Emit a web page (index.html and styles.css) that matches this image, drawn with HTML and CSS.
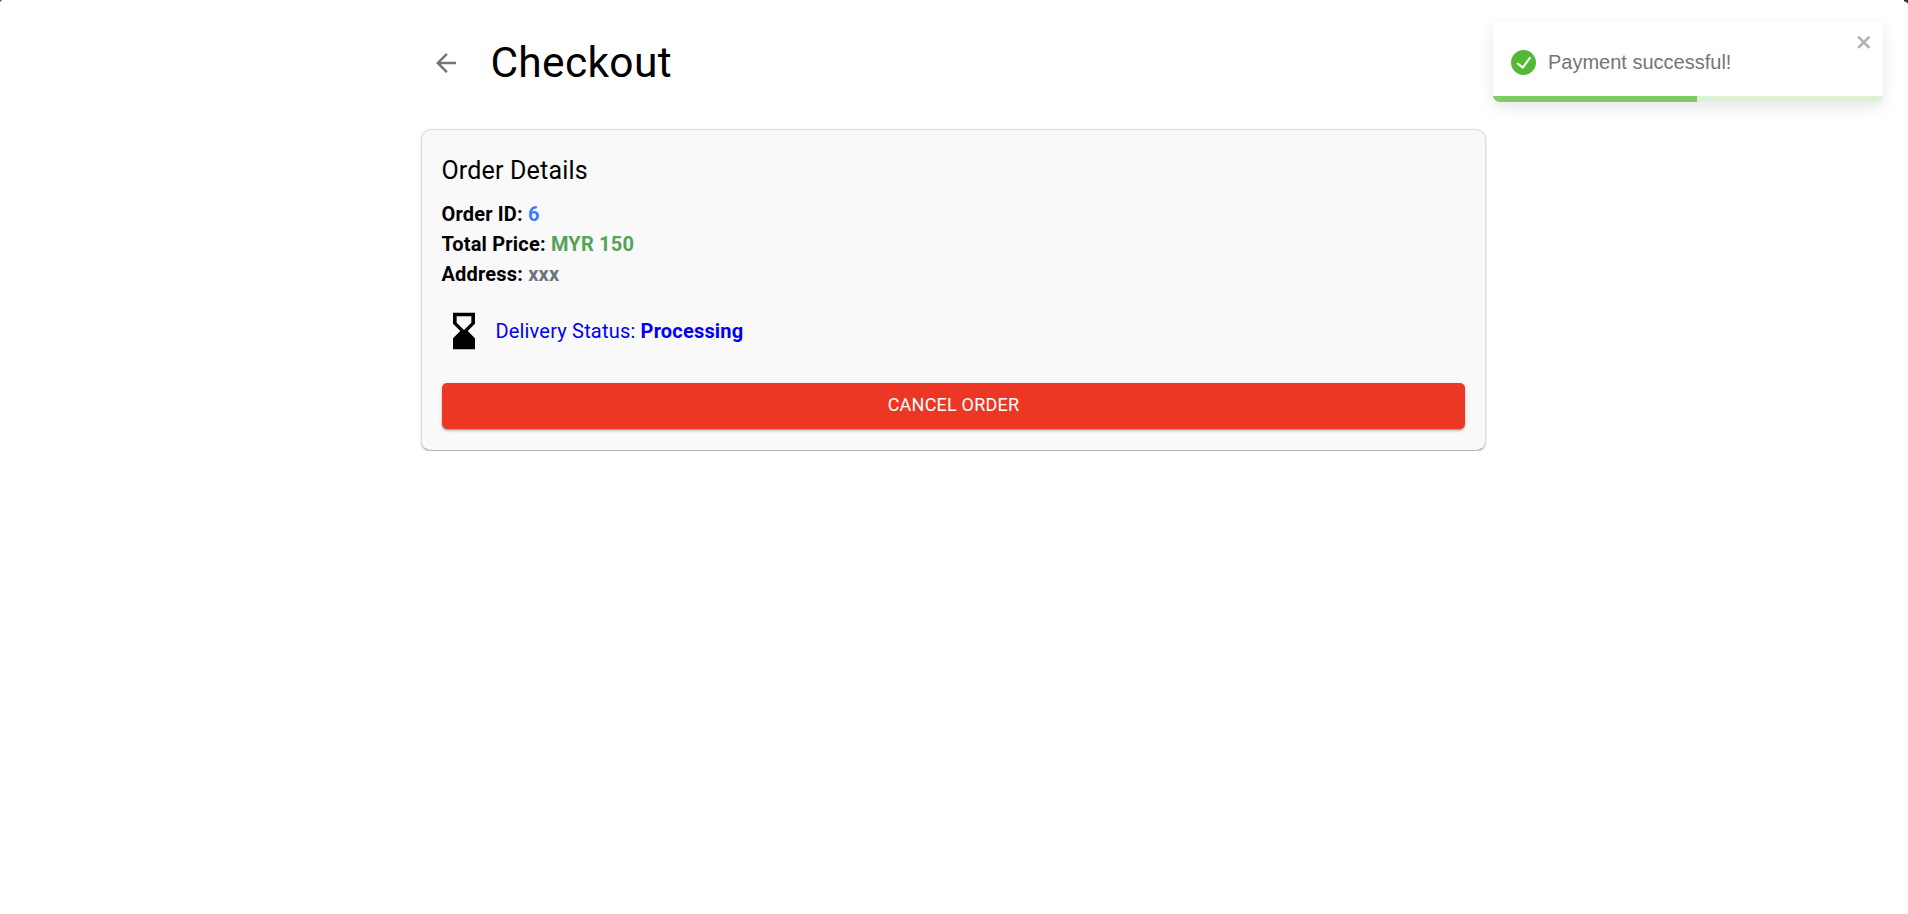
FILE: index.html
```html
<!DOCTYPE html>
<html lang="en">
<head>
<meta charset="utf-8">
<title>Checkout</title>
<link rel="stylesheet" href="styles.css">
</head>
<body>
<i class="corner corner-left"></i>
<i class="corner corner-right"></i>
<main class="container">
  <header class="header">
    <button class="back" aria-label="Back">
      <svg class="back-icon" viewBox="0 0 24 24"><path d="M20 11H7.83l5.59-5.59L12 4l-8 8 8 8 1.41-1.41L7.83 13H20v-2z"/></svg>
    </button>
    <h1 class="title">Checkout</h1>
  </header>
  <section class="card">
    <h2 class="card-title">Order Details</h2>
    <p class="row">Order ID: <span class="order-id">6</span></p>
    <p class="row">Total Price: <span class="price">MYR 150</span></p>
    <p class="row">Address: <span class="address">xxx</span></p>
    <div class="status">
      <svg class="status-icon" viewBox="0 0 24 24"><path d="m18 22-.01-6L14 12l3.99-4.01L18 2H6v6l4 4-4 3.99V22h12zM8 7.5V4h8v3.5l-4 4-4-4z"/></svg>
      <p class="status-text">Delivery Status: <strong>Processing</strong></p>
    </div>
    <button class="cancel">CANCEL ORDER</button>
  </section>
</main>
<div class="toast" role="alert">
  <svg class="toast-icon" viewBox="0 0 24 24"><path d="M12 0a12 12 0 1012 12A12.014 12.014 0 0012 0zm6.927 8.2l-6.845 9.289a1.011 1.011 0 01-1.43.188l-4.888-3.908a1 1 0 111.25-1.562l4.076 3.261 6.227-8.451a1 1 0 111.61 1.183z"/></svg>
  <span class="toast-text">Payment successful!</span>
  <svg class="toast-close" viewBox="0 0 14 16"><path fill-rule="evenodd" d="M7.71 8.23l3.75 3.75-1.48 1.48-3.75-3.75-3.75 3.75L1 11.98l3.75-3.75L1 4.48 2.48 3l3.75 3.75L9.98 3l1.48 1.48-3.75 3.75z"/></svg>
  <div class="progress"><div class="progress-bar"></div></div>
</div>
</body>
</html>
```
FILE: styles.css
```css
* { box-sizing: border-box; }
body {
  margin: 0;
  background: #fff;
  color: #000;
  font-family: Roboto, sans-serif;
  overflow: hidden;
}
h1, h2, p { margin: 0; font-weight: 400; }
button { border: 0; font-family: inherit; }

.container { width: 1065px; margin-left: calc(50% - 533px); padding-top: 37px; }

.header { display: flex; align-items: center; height: 52.5px; margin-bottom: 39.5px; }
.back {
  display: flex;
  width: 50px;
  padding: 10px;
  margin-right: 19.4px;
  background: none;
}
.back-icon { width: 30px; height: 30px; fill: #757575; }
.title { font-size: 42.5px; line-height: 52.5px; letter-spacing: 0.00735em; }

.card {
  height: 322px;
  padding: 21px 20px 0;
  border: 1px solid #ddd;
  border-bottom-color: #b4b4b4;
  border-radius: 10px;
  background: #f9f9f9;
  box-shadow: 0 1px 1px rgba(0, 0, 0, .14), 0 1px 3px rgba(0, 0, 0, .12);
}
.card-title { margin: 0 0 8px -0.6px; font-size: 25px; line-height: 40px; letter-spacing: 0.0075em; }
.row { margin-left: -0.6px; font-size: 20px; line-height: 30px; letter-spacing: 0.00938em; font-weight: 700; }
.order-id { color: #3a7ffb; }
.price { color: #55a357; }
.address { color: #6c757d; }

.status { display: flex; align-items: center; margin: 20px 0 30px; color: #0000f5; }
.status-icon { width: 44px; height: 44px; margin-right: 9.4px; fill: #000; }
.status-text { font-size: 20px; line-height: 30px; letter-spacing: 0.00938em; }

.cancel {
  display: block;
  width: 100%;
  height: 46px;
  padding: 0 0 3px;
  border-radius: 5px;
  background: #ec3724;
  color: #fff;
  font-size: 18px;
  font-weight: 400;
  letter-spacing: 0.012em;
  box-shadow: 0 3px 1px -2px rgba(0, 0, 0, .2), 0 2px 2px rgba(0, 0, 0, .14), 0 1px 5px rgba(0, 0, 0, .12);
}

.toast {
  position: absolute;
  top: 22px;
  right: 25px;
  display: flex;
  align-items: center;
  width: 390px;
  height: 80px;
  padding: 0 18px;
  border-radius: 7px;
  background: #fff;
  color: #757575;
  box-shadow: 0 5px 15px rgba(0, 0, 0, .1);
  overflow: hidden;
}
.toast-icon { width: 25px; height: 25px; margin-right: 12px; fill: #53b935; }
.toast-text { font-family: "Liberation Sans", Arial, sans-serif; font-size: 20px; }
.toast-close { position: absolute; top: 10px; right: 10px; width: 17.5px; height: 20px; fill: #b2b2b2; }
.progress { position: absolute; left: 0; right: 0; bottom: 0; height: 6px; background: #ddf1d7; }
.progress-bar { width: 204px; height: 6px; background: #7ecb68; }

.corner { position: absolute; top: 0; width: 4px; height: 6px; }
.corner-left { left: 0; width: 2px; height: 2px; background: radial-gradient(circle at 100% 100%, transparent 1px, #555 2px); }
.corner-right { right: 0; background: radial-gradient(circle at 0 100%, transparent 4px, #333 5px); }
```
